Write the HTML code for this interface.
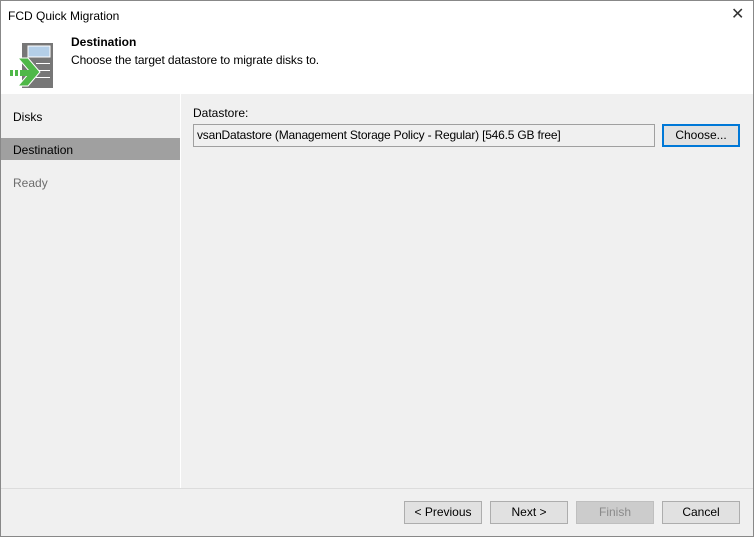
<!DOCTYPE html>
<html><head><style>
*{margin:0;padding:0;box-sizing:border-box}
body{width:754px;height:537px;overflow:hidden;font-family:"Liberation Sans",sans-serif;font-size:12px;color:#000;background:#f0f0f0;position:relative}
.a{position:absolute}
.btn{position:absolute;top:501px;height:23px;border:1px solid #adadad;background:#e1e1e1;text-align:center;line-height:21px;font-size:12px}
</style></head><body>
<div class="a" style="left:0;top:0;width:754px;height:94px;background:#fff"></div>
<div class="a" style="left:8px;top:9px;font-size:12px">FCD Quick Migration</div>
<div class="a" style="left:731px;top:4px;font-size:16px;color:#333">✕</div>
<svg class="a" style="left:0;top:0" width="60" height="95">
<rect x="22" y="43" width="31" height="45" fill="#777"/>
<rect x="28" y="46" width="22" height="11" fill="#b4cfe8" stroke="#fff" stroke-width="1"/>
<rect x="36" y="63" width="14" height="1" fill="#fff"/><rect x="36" y="70" width="14" height="1" fill="#fff"/><rect x="36" y="77" width="14" height="1" fill="#fff"/>
<polygon points="18,58 28,58 40,72 28,86 18,86 30,72" fill="#4fb848" stroke="#fff" stroke-width="1"/>
<rect x="10" y="70" width="3" height="6" fill="#4fb848"/><rect x="15" y="70" width="3" height="6" fill="#4fb848"/>
<rect x="20" y="70" width="12" height="6" fill="#4fb848"/>
</svg>
<div class="a" style="left:71px;top:35px;font-weight:bold">Destination</div>
<div class="a" style="left:71px;top:53px;letter-spacing:-0.1px">Choose the target datastore to migrate disks to.</div>
<div class="a" style="left:180px;top:94px;width:1px;height:394px;background:#fff"></div>
<div class="a" style="left:13px;top:110px">Disks</div>
<div class="a" style="left:0;top:138px;width:180px;height:22px;background:#a0a0a0"></div>
<div class="a" style="left:13px;top:143px">Destination</div>
<div class="a" style="left:13px;top:176px;color:#6d6d6d">Ready</div>
<div class="a" style="left:193px;top:106px">Datastore:</div>
<div class="a" style="left:193px;top:124px;width:462px;height:23px;border:1px solid #a0a0a0;background:#f0f0f0;padding-left:3px;line-height:21px;letter-spacing:-0.2px">vsanDatastore (Management Storage Policy - Regular) [546.5 GB free]</div>
<div class="a" style="left:662px;top:124px;width:78px;height:23px;border:2px solid #0078d7;background:#e1e1e1;text-align:center;line-height:19px">Choose...</div>
<div class="a" style="left:0;top:488px;width:754px;height:1px;background:#dcdcdc"></div>
<div class="btn" style="left:404px;width:78px">&lt; Previous</div>
<div class="btn" style="left:490px;width:78px">Next &gt;</div>
<div class="btn" style="left:576px;width:78px;background:#ccc;border-color:#bfbfbf;color:#8a8a8a">Finish</div>
<div class="btn" style="left:662px;width:78px">Cancel</div>
<div class="a" style="left:0;top:0;width:754px;height:537px;border:1px solid #888"></div>
</body></html>
